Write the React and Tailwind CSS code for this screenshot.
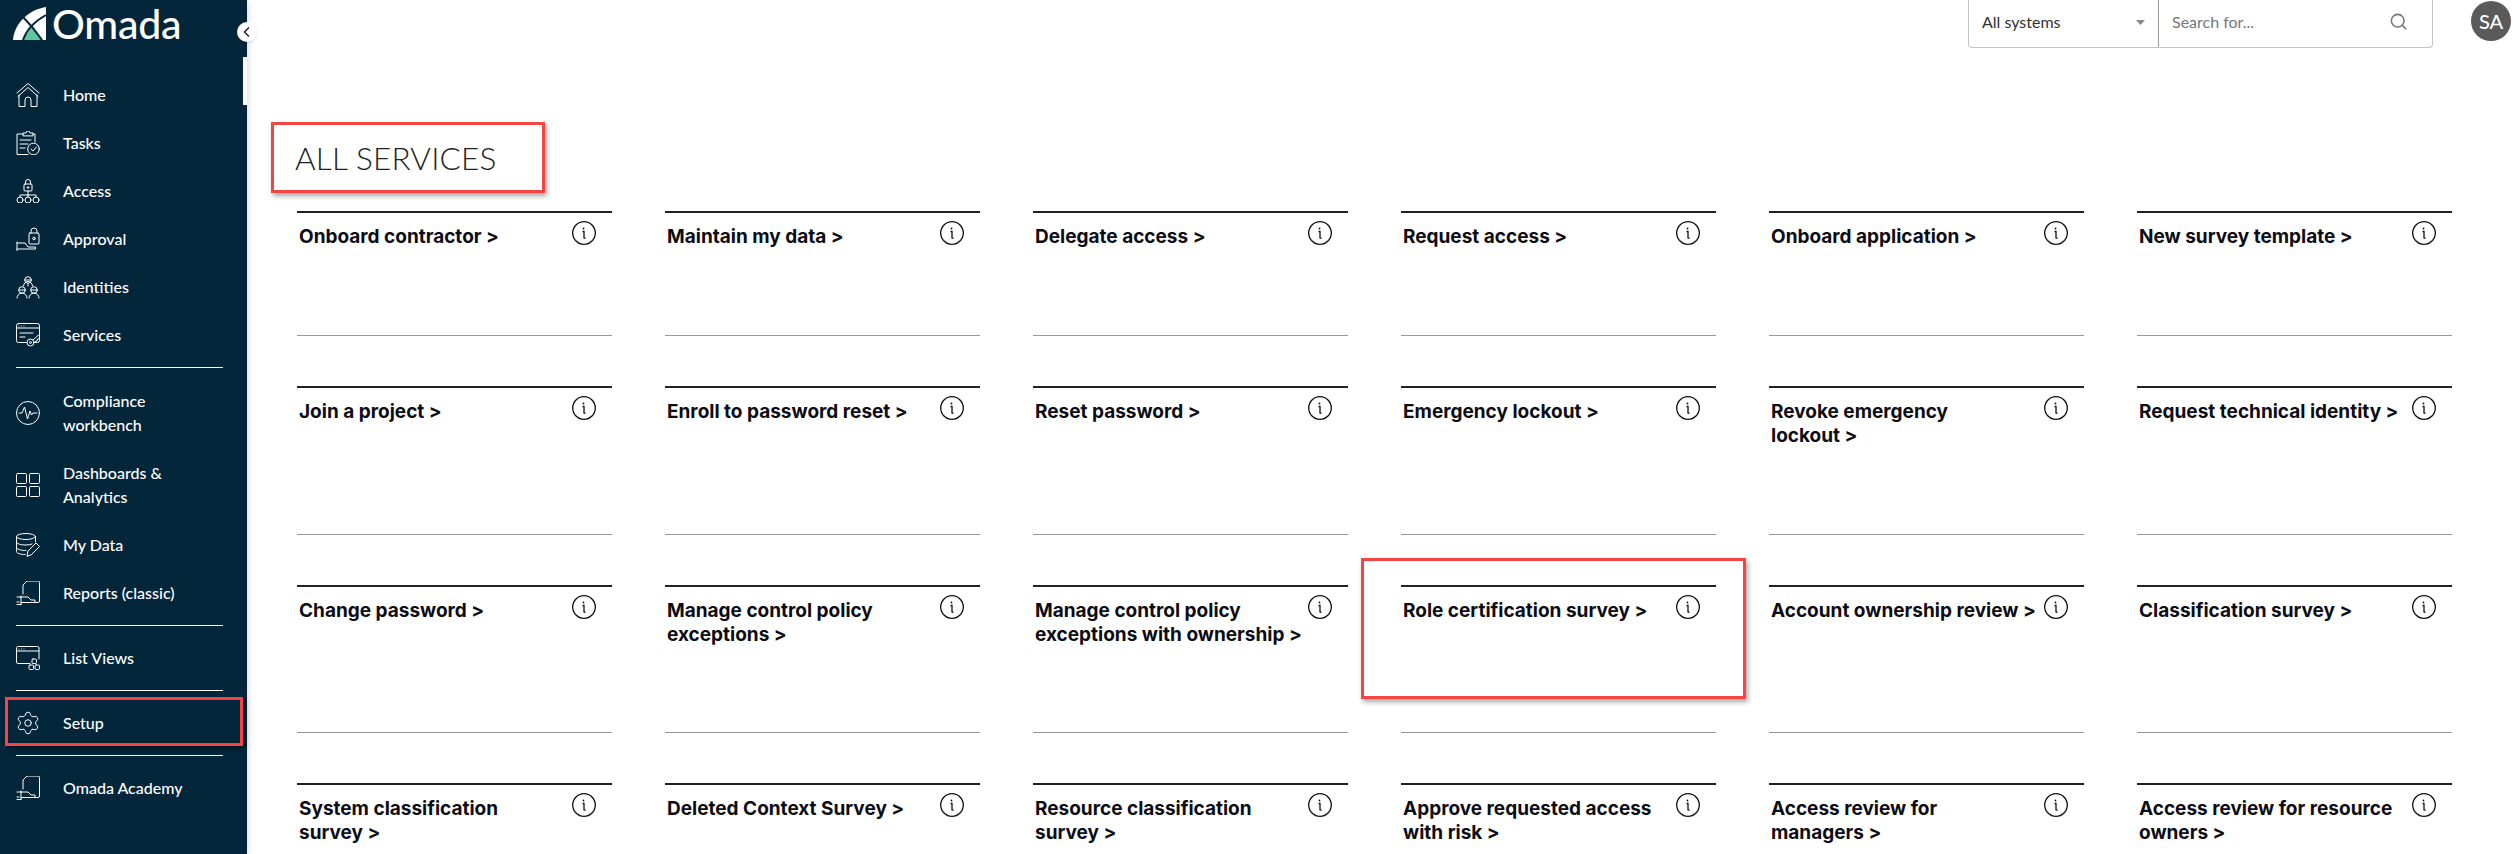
import { Settings, Search } from "lucide-react";

const S = ({ children }) => (
  <svg width="24" height="24" viewBox="0 0 24 24" fill="none" stroke="#fff" strokeWidth="1" strokeLinecap="round" strokeLinejoin="round" className="shrink-0">
    {children}
  </svg>
);

const icons = {
  home: (
    <S>
      <path d="M1 10 12 0.5 23 10" />
      <path d="M2 13.500 12 4.500l10 9" />
      <path d="M3 12v11.500h6V17a3 3 0 0 1 6 0v6.500h6V12" />
    </S>
  ),
  tasks: (
    <S>
      <path d="M7 3H1v20.500h11" />
      <path d="M17 3h2v8" />
      <path d="M7 4.500V2h3a2 2 0 0 1 4 0h3v2.500z" />
      <path d="M4 9h11M4 13h8M4 17h5" />
      <circle cx="17.500" cy="18" r="5.800" />
      <path d="m15 18 2 2 3.500-4" />
    </S>
  ),
  access: (
    <S>
      <rect x="8" y="5" width="8" height="7" rx="1" />
      <path d="M9.500 5V3a2.500 2.500 0 0 1 5 0v2" />
      <circle cx="12" cy="8.500" r="0.800" />
      <path d="M12 12v4M4 18v-2h16v2M12 16v2" />
      <circle cx="4" cy="21" r="3" />
      <circle cx="12" cy="21" r="3" />
      <circle cx="20" cy="21" r="3" />
    </S>
  ),
  approval: (
    <S>
      <rect x="13" y="6" width="10" height="11" rx="1" />
      <path d="M15 6V4a3 3 0 0 1 6 0v2" />
      <circle cx="18" cy="11.500" r="1.300" />
      <path d="M1 15v8.500M1 16h8l3 4h7.500v2H1" />
    </S>
  ),
  identities: (
    <S>
      <circle cx="12" cy="5" r="3.300" />
      <path d="M9 5h6M7.500 11a4.500 4.500 0 0 1 9 0M12 9v2" />
      <circle cx="6" cy="15" r="3.300" />
      <path d="M3 15h6M1 23a5 5 0 0 1 10 0" />
      <circle cx="18" cy="15" r="3.300" />
      <path d="M15 15h6M13 23a5 5 0 0 1 10 0" />
    </S>
  ),
  services: (
    <S>
      <rect x="0.500" y="0.500" width="23" height="19" rx="2" />
      <path d="M0.500 5h23M3 3h0M5.500 3h0M8 3h0" />
      <path d="M4 10h13M4 14h5" />
      <circle cx="14.500" cy="19.500" r="3.500" fill="#03263a" />
      <circle cx="14.500" cy="19.500" r="1" />
      <path d="m17 17 5.500-5 1 1v2.500l-2 .5-.5 2-2 .5" fill="#03263a" />
    </S>
  ),
  compliance: (
    <S>
      <circle cx="12" cy="12" r="11.500" />
      <path d="M3 12h3l2.500-6 3 12 2.500-8 1.500 4 1.500-2h4" />
    </S>
  ),
  dashboards: (
    <S>
      <rect x="0.500" y="0.500" width="10" height="10" rx="1" />
      <rect x="13.500" y="0.500" width="10" height="10" rx="1" />
      <rect x="0.500" y="13.500" width="10" height="10" rx="1" />
      <rect x="13.500" y="13.500" width="10" height="10" rx="1" />
    </S>
  ),
  data: (
    <S>
      <ellipse cx="10" cy="3.500" rx="9.500" ry="3" />
      <path d="M0.500 3.500v15c0 1.500 3 3 8.500 3M0.500 9c0 1.800 4 3 9.500 3 2.500 0 4.500-.3 6-1M0.500 14.500c0 1.800 4 3 9.500 3M19.500 3.500V9" />
      <path d="m11 23 1-5 8-8 3.500 3.500-8 8z" />
    </S>
  ),
  reports: (
    <S>
      <path d="M7 13V4l4-4h11a1.500 1.500 0 0 1 1.500 1.500V20a1.500 1.500 0 0 1-1.500 1.500h-3" />
      <path d="M1 16h4M1 21h2M1 23.500h4M5 15v8.500M5 16h7l3 3h4v2.500H5" />
    </S>
  ),
  list: (
    <S>
      <path d="M23 13V2a1.500 1.500 0 0 0-1.500-1.500h-19A1.500 1.500 0 0 0 .5 2v14A1.500 1.500 0 0 0 2 17.500h12" />
      <path d="M.5 5h22.500M3 3h0M5.500 3h0M8 3h0" />
      <rect x="16" y="13" width="4.500" height="4.500" rx="1" />
      <rect x="13" y="19" width="4.500" height="4.500" rx="1" />
      <rect x="19" y="19" width="4.500" height="4.500" rx="1" />
    </S>
  ),
  setup: <Settings size={26} strokeWidth={0.9} color="#fff" className="shrink-0 -ml-px" />,
};

const nav = [
  [["Home", "home"], ["Tasks", "tasks"], ["Access", "access"], ["Approval", "approval"], ["Identities", "identities"], ["Services", "services"]],
  [["Compliance workbench", "compliance"], ["Dashboards & Analytics", "dashboards"], ["My Data", "data"], ["Reports (classic)", "reports"]],
  [["List Views", "list"]],
  [["Setup", "setup"]],
  [["Omada Academy", "reports"]],
];

const services = [
  "Onboard contractor", "Maintain my data", "Delegate access", "Request access", "Onboard application", "New survey template",
  "Join a project", "Enroll to password reset", "Reset password", "Emergency lockout", "Revoke emergency\nlockout", "Request technical identity",
  "Change password", "Manage control policy\nexceptions", "Manage control policy\nexceptions with ownership", "Role certification survey", "Account ownership review", "Classification survey",
  "System classification\nsurvey", "Deleted Context Survey", "Resource classification\nsurvey", "Approve requested access\nwith risk", "Access review for\nmanagers", "Access review for resource\nowners",
];

function NavItem({ label, icon }) {
  const twoLines = label === "Compliance workbench" || label === "Dashboards & Analytics";
  return (
    <div className={`flex items-center ${twoLines ? "h-[72px] pb-px" : "h-12"}`}>
      <div className="w-[47px] flex justify-start">{icons[icon]}</div>
      <span className={`text-[16px] leading-6 font-medium text-white ${twoLines ? "w-[130px]" : ""}`}>{label}</span>
    </div>
  );
}

function Sidebar() {
  return (
    <aside className="relative w-[247px] h-[854px] shrink-0 bg-[#03263a] text-white pl-4 font-['Lato',sans-serif] shadow-[2px_0_6px_rgba(0,0,0,0.12)]">
      <div className="flex items-center h-[71px] -ml-[3px]">
        <svg width="34" height="34" viewBox="0 0 34 34" className="shrink-0 -mt-[23px]">
          <path d="M0 33C1 18 14 3 33 0v33z" fill="#fff" />
          <path d="M10 33 18.300 19.300 30 33z" fill="#5fc5a0" />
          <path d="M10 33Q15 18 33 8M9.300 9.300Q20 20 29 33" fill="none" stroke="#03263a" strokeWidth="2" />
        </svg>
        <span className="text-[41px] leading-none font-medium ml-[5px] -mt-[24px] tracking-[-0.2px]">Omada</span>
      </div>
      <div className="absolute right-0 top-[57px] w-1 h-12 bg-white" />
      <div className="absolute -right-[10px] top-[22px] w-5 h-5 rounded-full bg-white shadow flex items-center justify-center z-10">
        <svg width="10" height="12" viewBox="0 0 10 12" fill="none" stroke="#222" strokeWidth="1.500">
          <path d="M7 1.500 2.500 6 7 10.500" />
        </svg>
      </div>
      {nav.map((group, i) => (
        <div key={i} className={`w-[207px] ${i < nav.length - 1 ? "border-b border-white" : ""} ${i === 0 ? "pb-2" : i === 1 ? "pt-[9px] pb-2" : i === 2 ? "py-2" : i === 3 ? "py-2" : "pt-2"}`}>
          {group.map(([label, icon]) => (
            <NavItem key={label} label={label} icon={icon} />
          ))}
        </div>
      ))}
      <div className="absolute left-[5px] top-[697px] w-[238px] h-[49px] border-[3px] border-[#f44444] shadow-[2px_3px_5px_rgba(0,0,0,0.35)]" />
    </aside>
  );
}

function Card({ title }) {
  return (
    <div className="border-t-2 border-b border-t-[#222] border-b-[#999] flex items-start pl-[2px]">
      <div className="w-[273px] pt-3 text-[19px] leading-6 font-bold text-[#0c0c14] whitespace-pre-line">
        {title} <span>&gt;</span>
      </div>
      <svg width="24" height="24" viewBox="0 0 24 24" fill="none" stroke="#111" strokeWidth="1.300" className="mt-2 shrink-0">
        <circle cx="12" cy="12" r="11.300" />
        <circle cx="11.500" cy="7.500" r="0.900" fill="#111" stroke="none" />
        <path d="M10.500 10.500h1.500v6.500l1.500.3" />
      </svg>
    </div>
  );
}

export default function App() {
  return (
    <div className="flex w-[2515px] h-[854px] overflow-hidden bg-white font-['Inter',sans-serif]">
      <Sidebar />
      <main className="relative flex-1 min-w-0">
        <div className="flex justify-end h-[48px] items-start pr-[4px] font-['Lato',sans-serif]">
          <div className="flex w-[465px] h-[48px] border border-t-0 border-[#c4c4c4] rounded-b text-[#555] text-[16px]">
            <div className="w-[190px] flex items-center justify-between pl-[13px] pr-[13px] pb-[3px] border-r border-[#999] text-[#333]">
              <span>All systems</span>
              <svg width="9" height="5" viewBox="0 0 9 5"><path d="M0 0h9L4.500 5z" fill="#888" /></svg>
            </div>
            <div className="flex-1 flex items-center justify-between pl-[13px] pr-[24px] pb-[4px]">
              <span className="text-[#777]">Search for...</span>
              <Search size={19} color="#777" />
            </div>
          </div>
          <div className="ml-[38px] w-10 h-10 mt-[1px] rounded-full bg-[#5a5a5a] text-white text-[20px] font-medium flex items-center justify-center">SA</div>
        </div>
        <div className="ml-[48px] mt-[97px] h-[28px] flex items-center text-[31.500px] leading-none font-light text-[#222] tracking-[0.2px] font-['Lato',sans-serif]">
          ALL SERVICES
        </div>
        <div className="ml-[50px] mt-[38px] grid grid-cols-[repeat(6,315px)] gap-x-[53px] gap-y-[50px] grid-rows-[125px_149px_148px_100px]">
          {services.map((t) => (
            <Card key={t} title={t} />
          ))}
        </div>
        <div className="absolute left-[24px] top-[122px] w-[274px] h-[71px] border-[3px] border-[#f44444] shadow-[2px_3px_5px_rgba(0,0,0,0.35)]" />
        <div className="absolute left-[1114px] top-[558px] w-[385px] h-[141px] border-[3px] border-[#f44444] shadow-[2px_3px_5px_rgba(0,0,0,0.35)]" />
      </main>
    </div>
  );
}
